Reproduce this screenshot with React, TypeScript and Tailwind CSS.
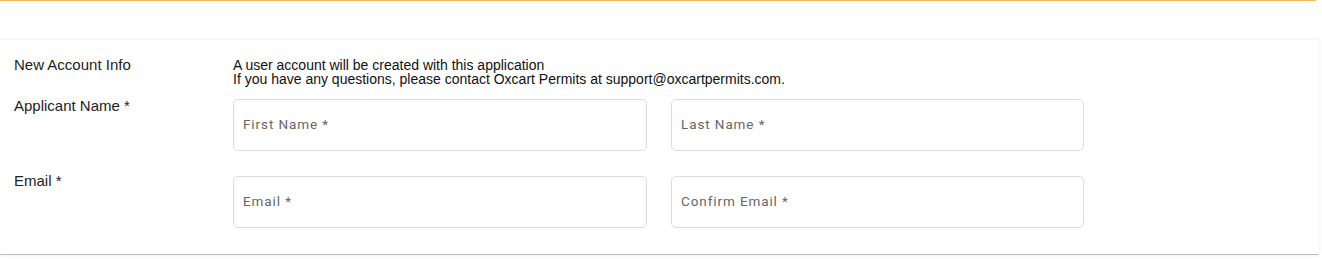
export default function App() {
  const inputClass =
    "h-[52px] w-full rounded-[5px] border border-[#dcdcdc] bg-white px-[9px] pb-[2px] text-[13.5px] tracking-[0.9px] text-[#333] outline-none placeholder:text-[#666] [font-family:Roboto,'Liberation_Sans',sans-serif]";

  return (
    <div className="min-h-[259px] bg-white [font-family:'Liberation_Sans',Arial,sans-serif]">
      <div className="h-px w-[1316px] bg-[#fbb954]" />
      <div className="h-[39px]" />
      <div className="w-[1319px] border-b border-[#bdbdbd] bg-white pb-[26px] pt-[16px] shadow-[0_0_4px_rgba(0,0,0,0.08)]">
        <div className="grid grid-cols-[195px_414px_413px] gap-x-[24px] pl-[14px]">
          <div className="text-[15px] leading-[18px] text-[#222]">New Account Info</div>
          <div className="col-span-2 pt-[2px] text-[14px] leading-[14px] text-[#111]">
            <div>A user account will be created with this application</div>
            <div>If you have any questions, please contact Oxcart Permits at support@oxcartpermits.com.</div>
          </div>

          <div className="mt-[11px] text-[15px] leading-[18px] text-[#222]">Applicant Name *</div>
          <input className={`mt-[13px] ${inputClass}`} placeholder="First Name *" />
          <input className={`mt-[13px] ${inputClass}`} placeholder="Last Name *" />

          <div className="mt-[21px] text-[15px] leading-[18px] text-[#222]">Email *</div>
          <input className={`mt-[25px] ${inputClass}`} placeholder="Email *" />
          <input className={`mt-[25px] ${inputClass}`} placeholder="Confirm Email *" />
        </div>
      </div>
    </div>
  );
}
